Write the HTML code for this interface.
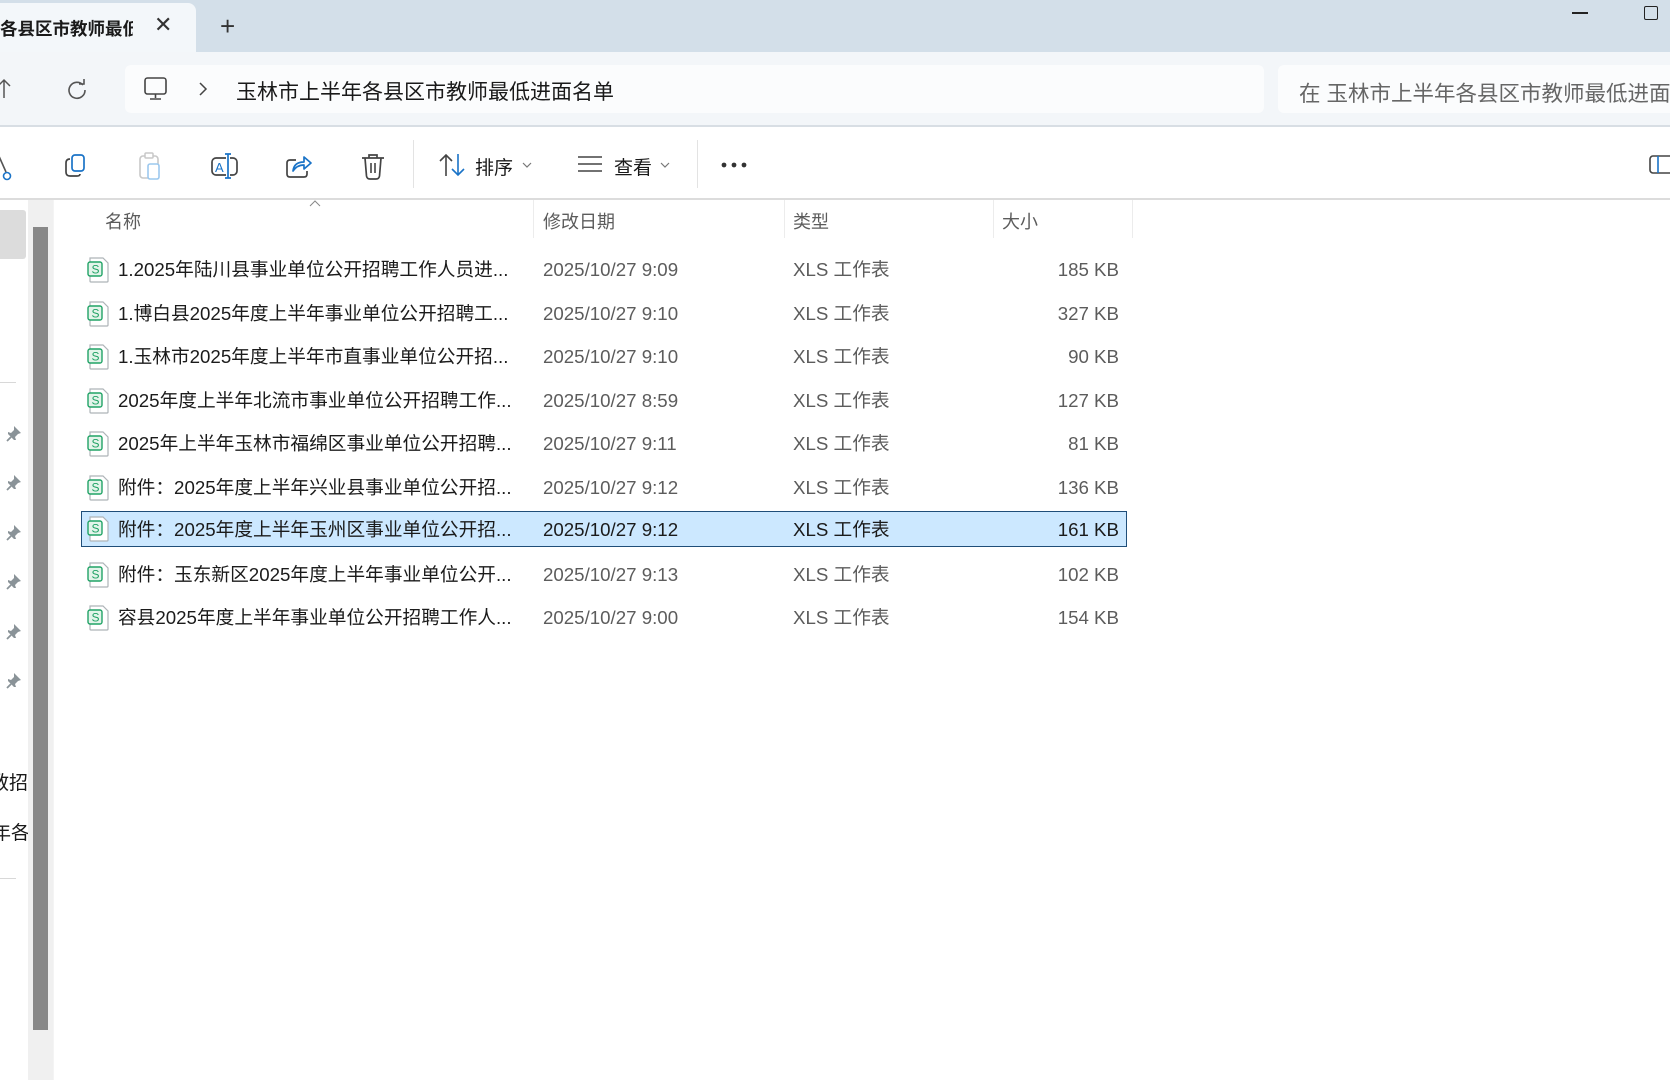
<!DOCTYPE html>
<html><head><meta charset="utf-8"><style>
*{margin:0;padding:0;box-sizing:border-box}
body{width:1670px;height:1080px;overflow:hidden;background:#fff;font-family:"Liberation Sans","Noto Sans CJK SC",sans-serif;position:relative}
.a{position:absolute;white-space:nowrap}
.row{position:absolute;left:81px;width:1046px;height:36px}
.row span{position:absolute;top:6px;font-size:18.7px;line-height:24px}
.n{left:37px;color:#1b1b1b}
.d{left:462px;color:#5c5c5c}
.t{left:712px;color:#5c5c5c}
.s{right:8px;color:#5c5c5c}
.ic{position:absolute;left:6px;top:5px}
.sel{background:#cce8ff;border:1px solid #1f4e79}
.sel span{color:#1b1b1b}
.hd{position:absolute;top:208px;font-size:18px;color:#5c5c5c}
.vs{position:absolute;top:200px;height:38px;width:1px;background:#ececec}
</style></head><body>
<div class="a" style="left:0;top:0;width:1670px;height:52px;background:#d3dfe9"></div>
<div class="a" style="left:-10px;top:3px;width:206px;height:49px;background:#f3f7fa;border-radius:8px 8px 0 0"></div>
<div class="a" style="left:0;top:16px;font-size:17.5px;font-weight:bold;color:#1a1a1a;width:133px;overflow:hidden">各县区市教师最低</div>
<div class="a" style="left:154px;top:12px;font-size:22px;color:#333">✕</div>
<div class="a" style="left:220px;top:11px;font-size:26px;color:#333;font-weight:300">+</div>
<div class="a" style="left:1572px;top:12px;width:16px;height:1.5px;background:#222"></div>
<div class="a" style="left:1644px;top:6px;width:14px;height:14px;border:1.5px solid #222;border-radius:2px"></div>
<div class="a" style="left:0;top:52px;width:1670px;height:75px;background:#f3f6f9;border-bottom:2px solid #d8dee4"></div>
<div class="a" style="left:125px;top:65px;width:1139px;height:48px;background:#fbfcfd;border-radius:6px"></div>
<div class="a" style="left:1278px;top:65px;width:400px;height:48px;background:#fbfcfd;border-radius:6px"></div>
<svg class="a" style="left:0;top:76px" width="20" height="26"><path d="M4 4 L4 22 M-2 10 L4 4 L10 10" stroke="#555" stroke-width="1.5" fill="none"/></svg>
<svg class="a" style="left:66px;top:78px" width="22" height="22"><path d="M17 7 A8 8 0 1 0 19 12" stroke="#555" stroke-width="1.6" fill="none"/><path d="M13 6 L18 6 L18 1" stroke="#555" stroke-width="1.6" fill="none"/></svg>
<svg class="a" style="left:143px;top:76px" width="26" height="26"><rect x="2" y="2" width="21" height="16" rx="2.5" stroke="#444" stroke-width="1.6" fill="none"/><path d="M12.5 18 V22 M7 23 H18" stroke="#444" stroke-width="1.6"/></svg>
<svg class="a" style="left:197px;top:81px" width="12" height="16"><path d="M3 2 L9 8 L3 14" stroke="#444" stroke-width="1.5" fill="none"/></svg>
<div class="a" style="left:236px;top:76px;font-size:21px;color:#1a1a1a">玉林市上半年各县区市教师最低进面名单</div>
<div class="a" style="left:1299px;top:77px;font-size:21.5px;color:#666">在 玉林市上半年各县区市教师最低进面</div>
<svg class="a" style="left:0;top:152px" width="16" height="30"><path d="M-2 2 L6 20" stroke="#555" stroke-width="1.6"/><circle cx="7" cy="24" r="3.5" stroke="#1a73c7" stroke-width="1.6" fill="none"/></svg>
<svg class="a" style="left:62px;top:152px" width="28" height="28"><rect x="10" y="3" width="12" height="16" rx="3" stroke="#1a73c7" stroke-width="1.7" fill="none"/><path d="M8 7 Q4 7 4 11 V20 Q4 24 8 24 H15 Q18 24 18 22" stroke="#444" stroke-width="1.7" fill="none"/></svg>
<svg class="a" style="left:137px;top:151px" width="28" height="30"><rect x="3" y="5" width="18" height="22" rx="3" stroke="#c8c8c8" stroke-width="1.6" fill="none"/><rect x="8" y="2" width="8" height="5" rx="1" stroke="#c8c8c8" stroke-width="1.5" fill="#fff"/><rect x="11" y="13" width="11" height="15" rx="2" stroke="#9cc8ee" stroke-width="1.6" fill="#fff"/></svg>
<svg class="a" style="left:210px;top:151px" width="30" height="30"><rect x="2" y="7" width="25" height="17" rx="4" stroke="#444" stroke-width="1.7" fill="none"/><rect x="16" y="3" width="4" height="25" fill="#fff"/><path d="M18 3 V27 M15 3 H21 M15 27 H21" stroke="#1a73c7" stroke-width="1.7"/><text x="5" y="21" font-size="13" fill="#1a73c7" font-family="Liberation Sans">A</text></svg>
<svg class="a" style="left:284px;top:151px" width="30" height="30"><path d="M12 9 H6 Q3 9 3 12 V23 Q3 26 6 26 H20 Q23 26 23 23 V20" stroke="#444" stroke-width="1.7" fill="none"/><path d="M9 20 Q10 11 20 11 V6 L27 12 L20 18 V14 Q13 14 9 20 Z" stroke="#1a73c7" stroke-width="1.7" fill="none" stroke-linejoin="round"/></svg>
<svg class="a" style="left:359px;top:151px" width="28" height="30"><path d="M3 7 H25 M10 7 V4 H18 V7" stroke="#444" stroke-width="1.7" fill="none"/><path d="M6 7 L7.5 25 Q8 28 11 28 H17 Q20 28 20.5 25 L22 7" stroke="#444" stroke-width="1.7" fill="none"/><path d="M12 12 V22 M16 12 V22" stroke="#444" stroke-width="1.6"/></svg>
<div class="a" style="left:413px;top:140px;width:1px;height:48px;background:#e3e3e3"></div>
<svg class="a" style="left:438px;top:152px" width="30" height="26"><path d="M8 24 V3 M2 9 L8 3 L14 9" stroke="#444" stroke-width="1.6" fill="none"/><path d="M20 2 V23 M14 17 L20 23 L26 17" stroke="#1a73c7" stroke-width="1.6" fill="none"/></svg>
<div class="a" style="left:475px;top:153px;font-size:19px;color:#1a1a1a">排序</div>
<svg class="a" style="left:522px;top:161px" width="10" height="8"><path d="M1 2 L5 6 L9 2" stroke="#777" stroke-width="1.2" fill="none"/></svg>
<svg class="a" style="left:576px;top:154px" width="28" height="20"><path d="M2 3 H26 M2 10 H26 M2 17 H26" stroke="#444" stroke-width="1.6"/></svg>
<div class="a" style="left:614px;top:153px;font-size:19px;color:#1a1a1a">查看</div>
<svg class="a" style="left:660px;top:161px" width="10" height="8"><path d="M1 2 L5 6 L9 2" stroke="#777" stroke-width="1.2" fill="none"/></svg>
<div class="a" style="left:697px;top:140px;width:1px;height:48px;background:#e3e3e3"></div>
<svg class="a" style="left:720px;top:160px" width="30" height="10"><circle cx="4" cy="5" r="2.4" fill="#333"/><circle cx="14" cy="5" r="2.4" fill="#333"/><circle cx="24" cy="5" r="2.4" fill="#333"/></svg>
<svg class="a" style="left:1648px;top:154px" width="22" height="22"><rect x="2" y="2" width="24" height="17" rx="3" stroke="#444" stroke-width="1.6" fill="none"/><path d="M10 2 V19" stroke="#1a73c7" stroke-width="1.6"/></svg>
<div class="a" style="left:0;top:198px;width:1670px;height:2px;background:#dcdcdc"></div>
<div class="a" style="left:0;top:210px;width:26px;height:49px;background:#dcdcdc;border-radius:0 3px 3px 0"></div>
<div class="a" style="left:0;top:382px;width:16px;height:1px;background:#d8d8d8"></div>
<div class="a" style="left:0;top:878px;width:16px;height:1px;background:#d8d8d8"></div>
<div class="a" style="left:0;top:768px;font-size:19px;color:#1a1a1a;width:28px;overflow:hidden;direction:rtl">教招</div>
<div class="a" style="left:-8px;top:818px;font-size:19px;color:#1a1a1a;width:36px;overflow:hidden">年各县</div>
<div class="a" style="left:28px;top:200px;width:25px;height:880px;background:#f0f0f0"></div>
<div class="a" style="left:33px;top:227px;width:15px;height:803px;background:#888"></div>
<div class="a" style="left:53px;top:200px;width:1px;height:880px;background:#f4f4f4"></div>
<svg class="a" style="left:6px;top:424px" width="18" height="300">
<g fill="#8a9398" id="p"><path d="M8 2 L15 9 L12 10 L9 13 L10 16 L8 16 L2 10 L2 8 L5 9 L8 6 Z"/><path d="M5 13 L1 17" stroke="#8a9398" stroke-width="1.8"/></g>
<use href="#p" y="49"/><use href="#p" y="99"/><use href="#p" y="148"/><use href="#p" y="198"/><use href="#p" y="247"/>
</svg>
<svg class="a" style="left:309px;top:200px" width="12" height="7"><path d="M1 6 L6 1 L11 6" stroke="#888" stroke-width="1" fill="none"/></svg>
<div class="hd" style="left:105px">名称</div>
<div class="hd" style="left:543px">修改日期</div>
<div class="hd" style="left:793px">类型</div>
<div class="hd" style="left:1002px">大小</div>
<div class="vs" style="left:533px"></div><div class="vs" style="left:784px"></div><div class="vs" style="left:993px"></div><div class="vs" style="left:1132px"></div>

<svg width="0" height="0" style="position:absolute"><defs><g id="x"><path d="M3 1 H16 L21 6 V24 Q21 25 20 25 H4 Q3 25 3 24 Z" fill="#fff" stroke="#aeb4b8" stroke-width="1.2"/><rect x="1" y="5" width="14" height="14" rx="2" fill="#e3f4ea" stroke="#21a366" stroke-width="1.4"/><text x="4.5" y="16.5" font-size="12" fill="#21a366" font-family="Liberation Sans">S</text></g></defs></svg>

<div class="row" style="top:252px"><svg class="ic" width="24" height="27"><use href="#x"/></svg><span class="n">1.2025年陆川县事业单位公开招聘工作人员进...</span><span class="d">2025/10/27 9:09</span><span class="t">XLS 工作表</span><span class="s">185 KB</span></div>
<div class="row" style="top:296px"><svg class="ic" width="24" height="27"><use href="#x"/></svg><span class="n">1.博白县2025年度上半年事业单位公开招聘工...</span><span class="d">2025/10/27 9:10</span><span class="t">XLS 工作表</span><span class="s">327 KB</span></div>
<div class="row" style="top:339px"><svg class="ic" width="24" height="27"><use href="#x"/></svg><span class="n">1.玉林市2025年度上半年市直事业单位公开招...</span><span class="d">2025/10/27 9:10</span><span class="t">XLS 工作表</span><span class="s">90 KB</span></div>
<div class="row" style="top:383px"><svg class="ic" width="24" height="27"><use href="#x"/></svg><span class="n">2025年度上半年北流市事业单位公开招聘工作...</span><span class="d">2025/10/27 8:59</span><span class="t">XLS 工作表</span><span class="s">127 KB</span></div>
<div class="row" style="top:426px"><svg class="ic" width="24" height="27"><use href="#x"/></svg><span class="n">2025年上半年玉林市福绵区事业单位公开招聘...</span><span class="d">2025/10/27 9:11</span><span class="t">XLS 工作表</span><span class="s">81 KB</span></div>
<div class="row" style="top:470px"><svg class="ic" width="24" height="27"><use href="#x"/></svg><span class="n">附件：2025年度上半年兴业县事业单位公开招...</span><span class="d">2025/10/27 9:12</span><span class="t">XLS 工作表</span><span class="s">136 KB</span></div>
<div class="row sel" style="top:511px"><svg class="ic" width="24" height="27" style="left:5px;top:4px"><use href="#x"/></svg><span class="n" style="left:36px;top:6px">附件：2025年度上半年玉州区事业单位公开招...</span><span class="d" style="left:461px;top:6px">2025/10/27 9:12</span><span class="t" style="left:711px;top:6px">XLS 工作表</span><span class="s" style="right:7px;top:6px">161 KB</span></div>
<div class="row" style="top:557px"><svg class="ic" width="24" height="27"><use href="#x"/></svg><span class="n">附件：玉东新区2025年度上半年事业单位公开...</span><span class="d">2025/10/27 9:13</span><span class="t">XLS 工作表</span><span class="s">102 KB</span></div>
<div class="row" style="top:600px"><svg class="ic" width="24" height="27"><use href="#x"/></svg><span class="n">容县2025年度上半年事业单位公开招聘工作人...</span><span class="d">2025/10/27 9:00</span><span class="t">XLS 工作表</span><span class="s">154 KB</span></div>
</body></html>
